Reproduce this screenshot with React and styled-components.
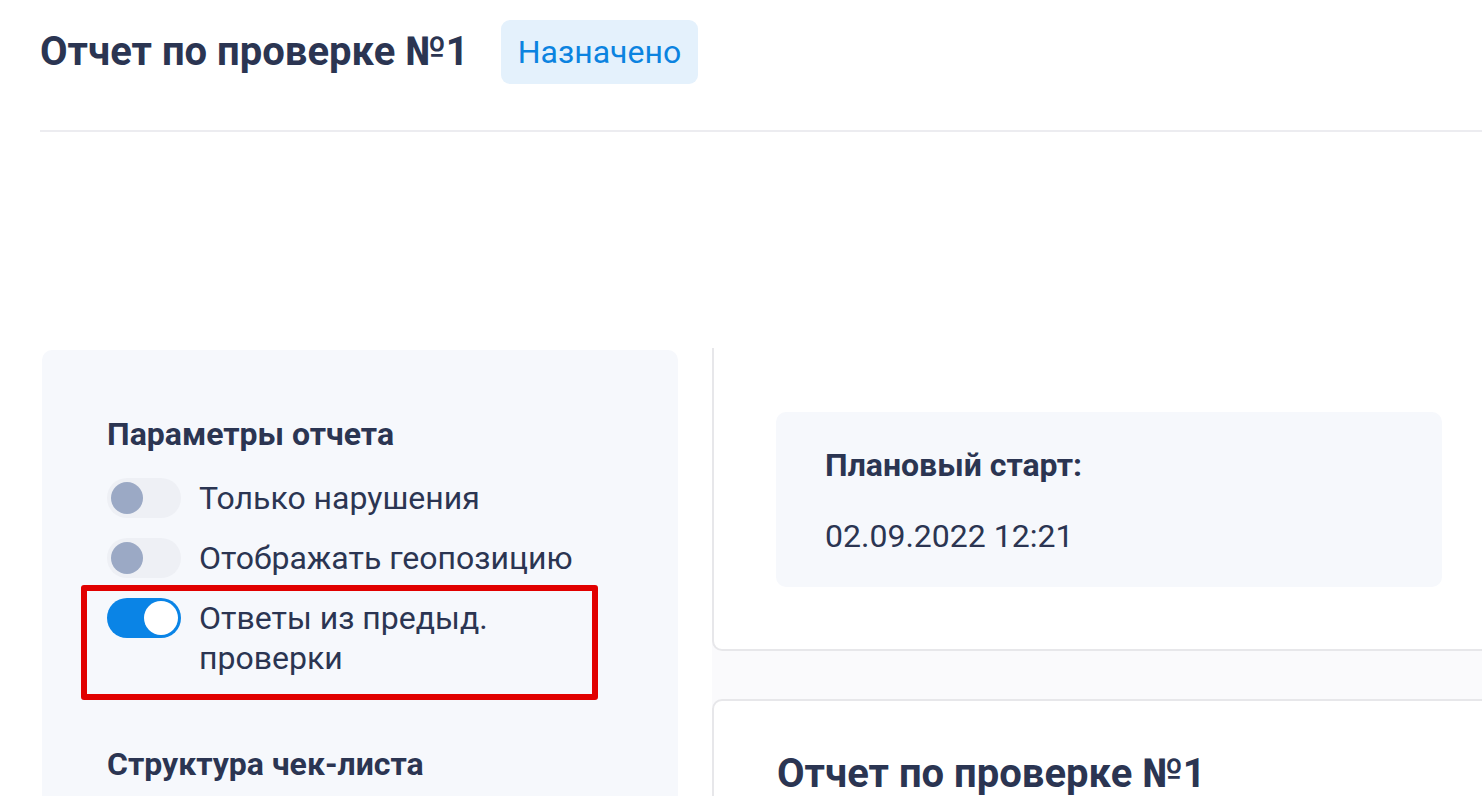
import React from 'react';
import styled, { createGlobalStyle } from 'styled-components';

const GlobalStyle = createGlobalStyle`
    html, body {
        margin: 0;
        padding: 0;
        background: #ffffff;
        font-family: Roboto, "Noto Sans", "Liberation Sans", sans-serif;
        color: #2b3552;
    }
`

const Page = styled.div`
    width: 1482px;
    height: 796px;
    overflow: hidden;
`

const Header = styled.div`
    display: flex;
    align-items: center;
    gap: 32px;
    padding: 20px 0 0 40px;
    height: 64px;
`

const Title = styled.h1`
    margin: 0;
    font-size: 40px;
    font-weight: 700;
    line-height: 46px;
    color: #2b3552;
`

const Badge = styled.span`
    display: flex;
    align-items: center;
    height: 64px;
    padding: 0 17px;
    border-radius: 9px;
    background: #e4f1fc;
    color: #0b83e0;
    font-size: 32px;
    font-weight: 400;
`

const Divider = styled.div`
    margin: 46px 0 0 40px;
    height: 2px;
    background: #ececf0;
`

const Main = styled.div`
    display: flex;
    align-items: flex-start;
    gap: 34px;
    margin-top: 216px;
    padding-left: 42px;
`

const SidePanel = styled.div`
    flex: none;
    width: 636px;
    height: 460px;
    margin-top: 2px;
    box-sizing: border-box;
    padding: 64px 65px 0;
    border-radius: 10px;
    background: #f6f8fc;
`

const SectionTitle = styled.div`
    font-size: 32px;
    font-weight: 700;
    line-height: 40px;
    margin-top: ${p => p.$top || 0}px;
`

const Options = styled.div`
    display: flex;
    flex-direction: column;
    gap: 20px;
    margin-top: 24px;
`

const OptionRow = styled.div`
    position: relative;
    display: flex;
    align-items: flex-start;
    gap: 18px;
`

const Track = styled.div`
    flex: none;
    display: flex;
    align-items: center;
    justify-content: ${p => (p.$on ? 'flex-end' : 'flex-start')};
    width: 74px;
    height: 40px;
    box-sizing: border-box;
    padding: 0 ${p => (p.$on ? 3 : 4)}px;
    border-radius: 20px;
    background: ${p => (p.$on ? '#0a84e6' : '#eef0f5')};
`

const Knob = styled.div`
    width: ${p => (p.$on ? 34 : 32)}px;
    height: ${p => (p.$on ? 34 : 32)}px;
    border-radius: 50%;
    background: ${p => (p.$on ? '#ffffff' : '#9ba9c5')};
`

const OptionLabel = styled.div`
    max-width: 392px;
    font-size: 32px;
    line-height: 40px;
    color: #2b3552;
`

const Highlight = styled.div`
    position: absolute;
    left: -26px;
    top: -13px;
    width: 517px;
    height: 115px;
    box-sizing: border-box;
    border: 6px solid #e10000;
    border-radius: 3px;
    pointer-events: none;
`

const RightColumn = styled.div`
    flex: none;
    width: 820px;
    display: flex;
    flex-direction: column;
    gap: 48px;
    background: #fafafc;
`

const Card = styled.div`
    box-sizing: border-box;
    background: #ffffff;
    border: 2px solid #e7e7ea;
    border-top: ${p => (p.$open ? 'none' : '2px solid #e7e7ea')};
    border-radius: ${p => (p.$open ? '0 0 10px 10px' : '10px 10px 0 0')};
    padding: ${p => (p.$open ? '64px 0 62px 62px' : '50px 0 40px 63px')};
`

const InfoBox = styled.div`
    width: 666px;
    height: 175px;
    box-sizing: border-box;
    padding: 33px 49px 0;
    border-radius: 10px;
    background: #f6f8fc;
`

const InfoLabel = styled.div`
    font-size: 32px;
    font-weight: 700;
    line-height: 40px;
`

const InfoValue = styled.div`
    margin-top: 31px;
    font-size: 32px;
    font-weight: 400;
    line-height: 40px;
`

const CardTitle = styled.h2`
    margin: 0;
    font-size: 40px;
    font-weight: 700;
    line-height: 46px;
    color: #2b3552;
`

const options = [
    { label: 'Только нарушения', on: false },
    { label: 'Отображать геопозицию', on: false },
    { label: 'Ответы из предыд. проверки', on: true, marked: true },
]

export default function App() {
    return (
        <Page>
            <GlobalStyle />
            <Header>
                <Title>Отчет по проверке №1</Title>
                <Badge>Назначено</Badge>
            </Header>
            <Divider />
            <Main>
                <SidePanel>
                    <SectionTitle>Параметры отчета</SectionTitle>
                    <Options>
                        {options.map(o => (
                            <OptionRow key={o.label}>
                                <Track $on={o.on}>
                                    <Knob $on={o.on} />
                                </Track>
                                <OptionLabel>{o.label}</OptionLabel>
                                {o.marked && <Highlight />}
                            </OptionRow>
                        ))}
                    </Options>
                    <SectionTitle $top={66}>Структура чек-листа</SectionTitle>
                </SidePanel>
                <RightColumn>
                    <Card $open>
                        <InfoBox>
                            <InfoLabel>Плановый старт:</InfoLabel>
                            <InfoValue>02.09.2022 12:21</InfoValue>
                        </InfoBox>
                    </Card>
                    <Card>
                        <CardTitle>Отчет по проверке №1</CardTitle>
                    </Card>
                </RightColumn>
            </Main>
        </Page>
    )
}
